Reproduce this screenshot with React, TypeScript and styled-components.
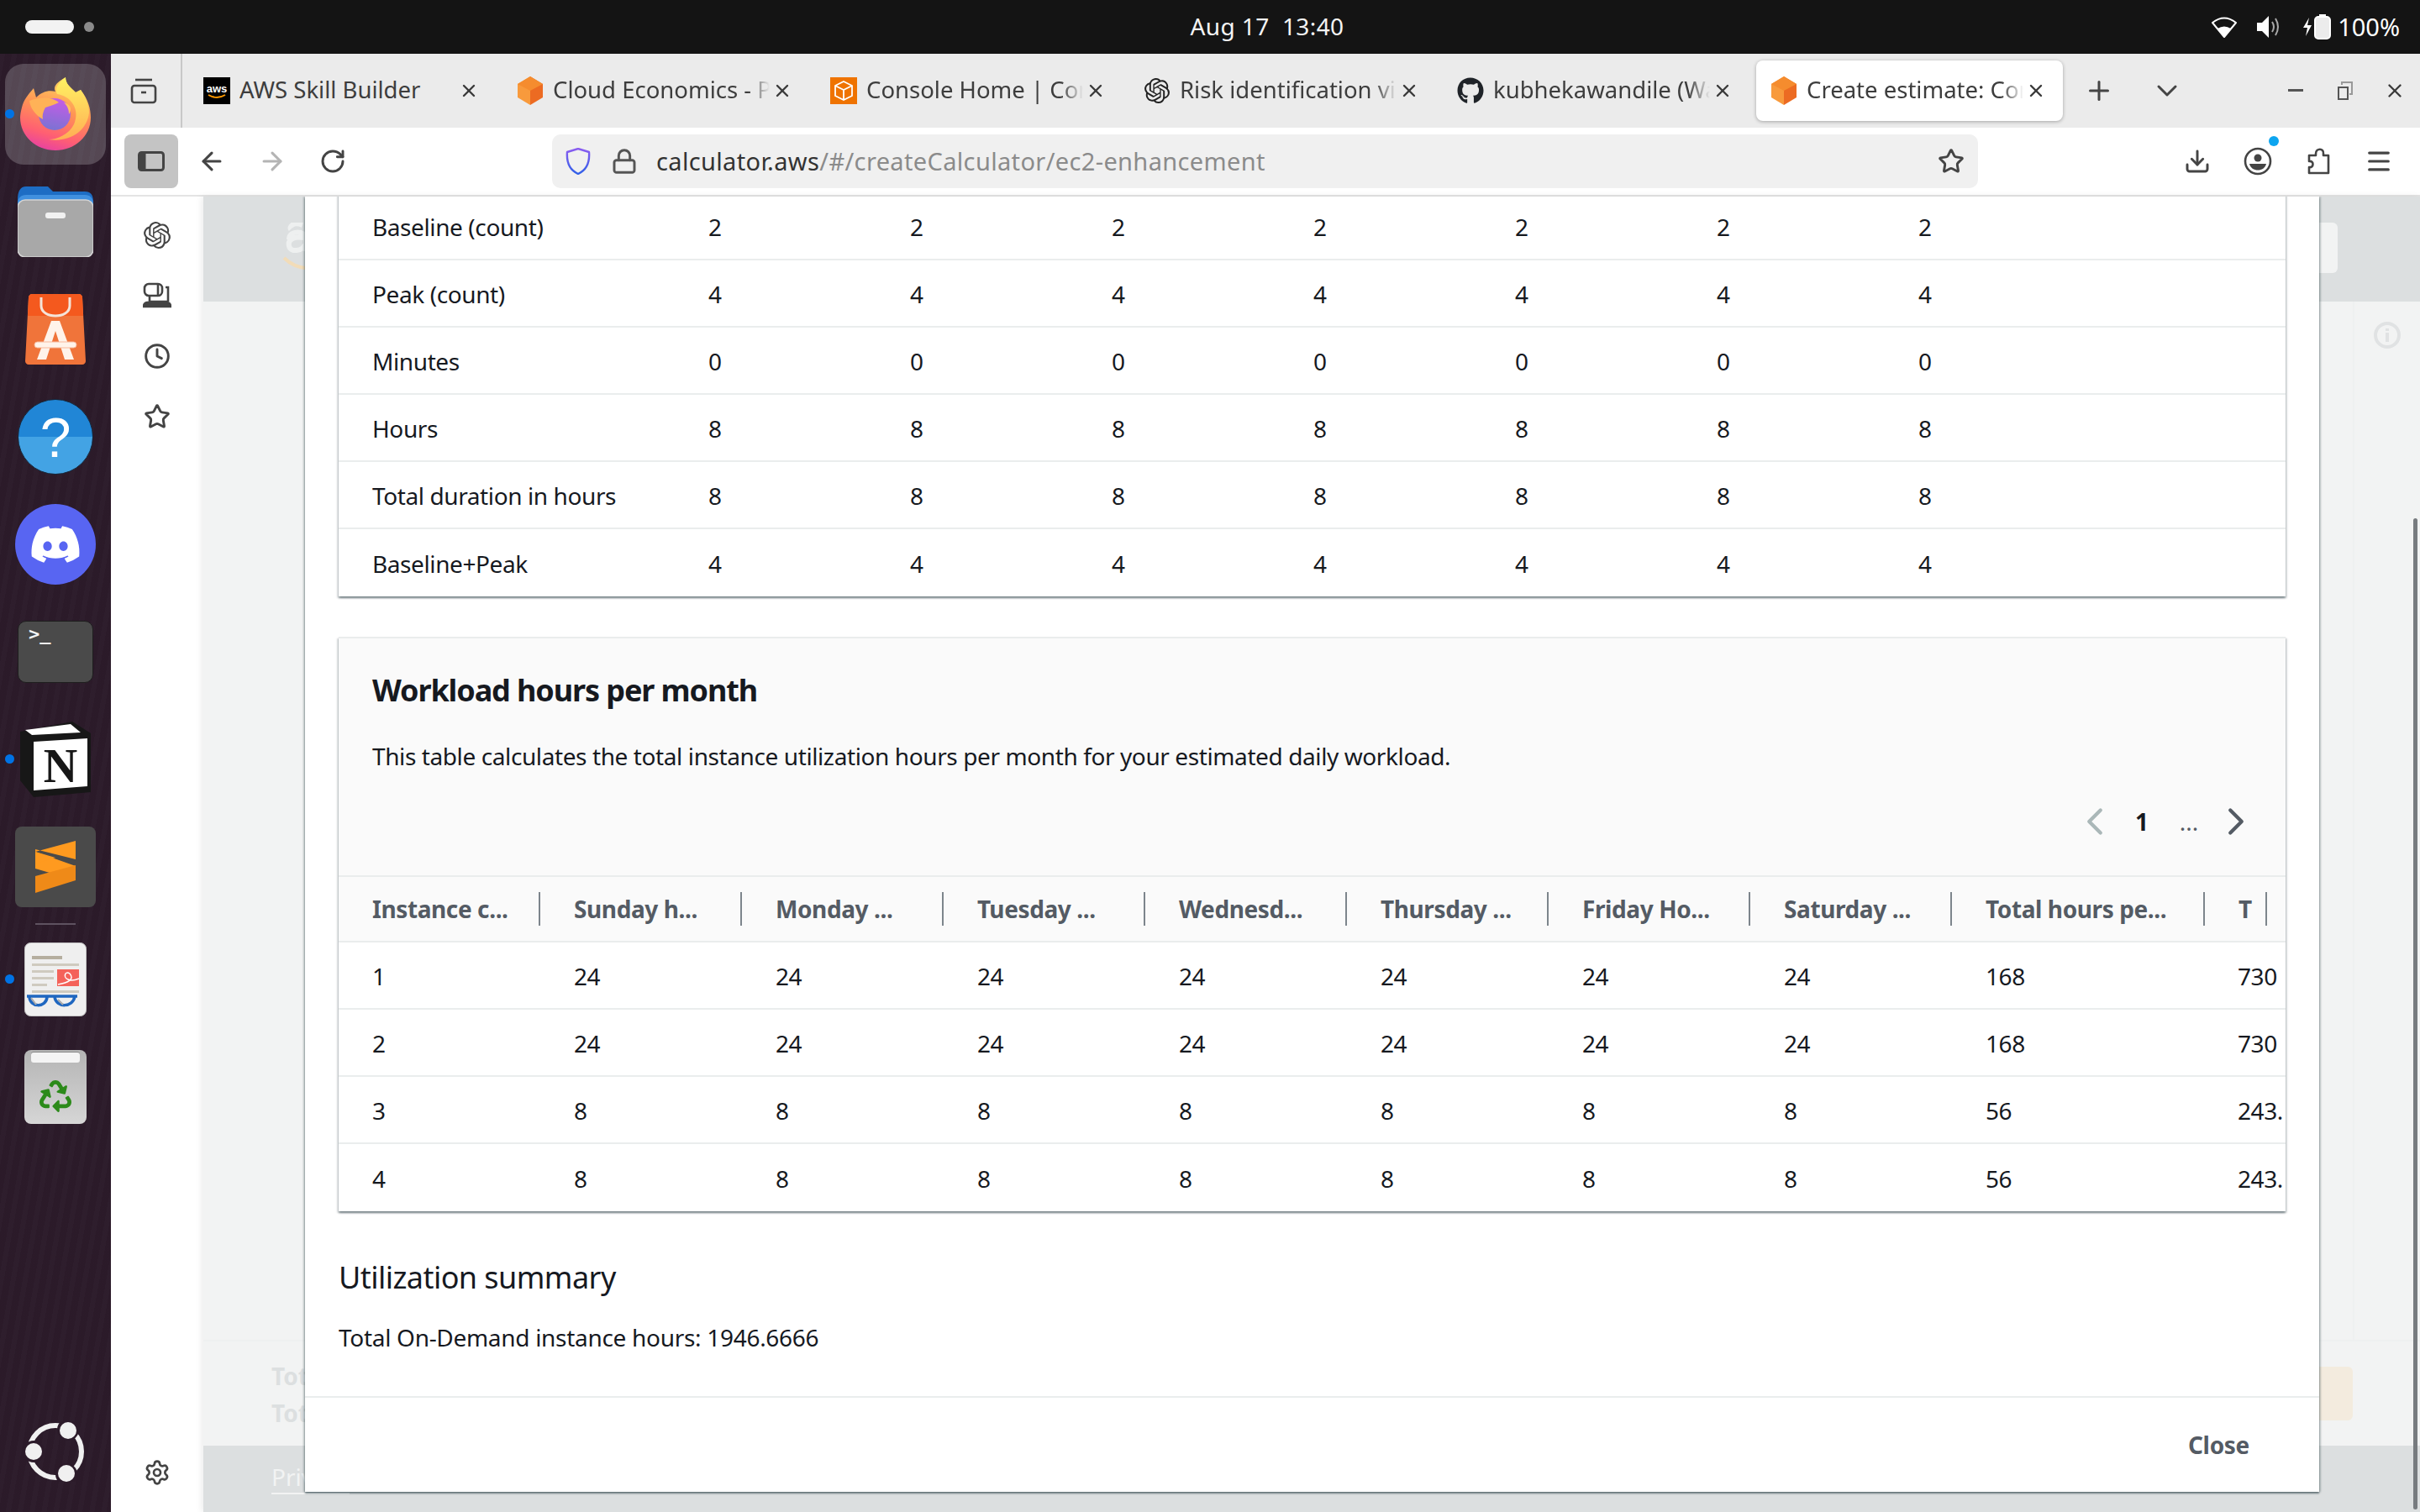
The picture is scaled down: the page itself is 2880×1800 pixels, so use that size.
import React from "react";
import styled, { createGlobalStyle, css } from "styled-components";
import {
  ArrowLeft, ArrowRight, RotateCw, Lock, Star, Download, Menu, Clock, Settings, Plus, ChevronDown, X,
  ChevronLeft, ChevronRight,
} from "lucide-react";
import { FaDiscord, FaGithub, FaRecycle } from "react-icons/fa";
import { SiOpenai } from "react-icons/si";

const UI = `"Noto Sans", "Open Sans", sans-serif`;

const Global = createGlobalStyle`
  html, body { margin: 0; padding: 0; width: 2880px; height: 1800px; overflow: hidden; background: #fff; }
  * { box-sizing: border-box; }
  body { font-family: ${UI}; }
`;

const Screen = styled.div`
  width: 2880px; height: 1800px; display: flex; flex-direction: column; overflow: hidden; position: relative;
`;
const TopBar = styled.header`
  height: 64px; background: #141414; display: grid; grid-template-columns: 1fr auto 1fr; align-items: center;
  color: #fff; padding: 0 24px 0 30px; flex: none;
`;
const Activities = styled.div`display: flex; align-items: center; gap: 12px;`;
const Pill = styled.span`width: 58px; height: 16px; border-radius: 8px; background: #f2f2f2;`;
const Dot = styled.span`width: 12px; height: 12px; border-radius: 50%; background: #8a8a8a;`;
const ClockText = styled.div`font-size: 28px; white-space: pre; font-weight: 400; letter-spacing: 0.4px; color: #f4f4f4; margin: -3px 0 0 130px;`;
const Status = styled.div`display: flex; align-items: center; justify-content: flex-end; gap: 24px; font-size: 29px; letter-spacing: 0;`;
const BatteryGroup = styled.div`display: flex; align-items: center; gap: 8px;`;
const Percent = styled.span`margin-top: -2px;`;

const Desktop = styled.div`flex: 1; display: flex; min-height: 0;`;
const Dock = styled.nav`
  width: 132px; flex: none; padding-top: 8px; padding-bottom: 36px; display: flex; flex-direction: column; position: relative;
  background:
    repeating-linear-gradient(100deg, rgba(255,255,255,0.012) 0 6px, rgba(0,0,0,0.02) 6px 14px),
    #2c1b2a;
`;
const Slot = styled.div`height: 128px; display: flex; align-items: center; justify-content: center; position: relative; flex: none;`;
const ActiveTile = styled.div`
  position: absolute; left: 6px; top: 4px; width: 120px; height: 120px; border-radius: 22px; background: rgba(255,255,255,0.2);
`;
const RunDot = styled.span`position: absolute; left: 6px; top: 58px; width: 11px; height: 11px; border-radius: 50%; background: #0073e5;`;
const DockSep = styled.div`width: 48px; height: 2px; margin: 3px auto 1px; background: #5e5260; flex: none;`;
const DockLogo = styled.div`margin-top: auto; display: flex; justify-content: center;`;
const HelpBall = styled.div`
  width: 90px; height: 90px; border-radius: 50%; border: 1px solid #16273a; color: #fff; font-size: 66px; line-height: 90px; text-align: center;
  background: linear-gradient(#2186d6 0 50%, #43a3e4 50% 100%); font-family: "Liberation Sans", sans-serif;
`;
const DiscordBall = styled.div`
  width: 96px; height: 96px; border-radius: 50%; background: #5865f2; color: #fff; display: flex; align-items: center; justify-content: center;
`;
const TerminalTile = styled.div`
  width: 90px; height: 74px; border-radius: 10px; background: #4a4a4a; border: 1px solid #1e1e1e; color: #f4f4f4;
  font: 700 22px/24px "DejaVu Sans Mono", monospace; padding: 3px 0 0 12px; letter-spacing: 0;
`;
const TrashTile = styled.div`
  width: 74px; height: 88px; border-radius: 8px; position: relative; color: #2c8a1a; display: flex; align-items: flex-end; justify-content: center; padding-bottom: 14px;
  background: linear-gradient(#b4b4b4, #d6d6d6);
`;
const TrashPaper = styled.span`
  position: absolute; left: 8px; right: 8px; top: 3px; height: 12px; border-radius: 3px; background: #f4f4f4; box-shadow: 0 -1px 0 #8a8a8a;
`;

const Browser = styled.div`flex: 1; display: flex; flex-direction: column; min-width: 0;`;
const TabBar = styled.div`height: 88px; background: #ebebeb; display: flex; align-items: center; flex: none; color: #3b3b3b;`;
const TabsBox = styled.div`
  width: 85px; height: 88px; border-right: 2px solid #c8c8c8; display: flex; align-items: center; justify-content: center; padding-right: 6px; margin-right: 8px; flex: none;
`;
const Tabs = styled.div`display: flex; gap: 8px;`;
const Tab = styled.div<{ $active?: boolean }>`
  width: 365px; height: 72px; display: flex; align-items: center; padding-left: 17px; position: relative; border-radius: 8px; flex: none;
  ${(p) => p.$active && css`background: #fff; box-shadow: 0 1px 4px rgba(0,0,0,0.3);`}
`;
const Favicon = styled.span`width: 32px; height: 32px; flex: none; display: flex; align-items: center; justify-content: center;`;
const TabTitle = styled.span<{ $fade?: boolean }>`
  margin: -2px 0 0 11px; width: 258px; overflow: hidden; white-space: nowrap; font-size: 27.5px; line-height: 40px; color: #3d3d3d; letter-spacing: 0;
  ${(p) => p.$fade && css`mask-image: linear-gradient(90deg, #000 90%, transparent 100%);`}
`;
const TabClose = styled.span`position: absolute; left: 319px; top: 22px; width: 28px; height: 28px; display: flex; align-items: center; justify-content: center; color: #3a3a3a;`;
const StripButton = styled.span<{ $gap: number }>`
  width: 48px; height: 48px; display: flex; align-items: center; justify-content: center; margin-left: ${(p) => p.$gap}px; color: #444; flex: none;
`;
const WindowControls = styled.div`margin-left: auto; display: flex; gap: 11px; padding-right: 6px;`;
const WinBtn = styled.span`width: 48px; height: 48px; display: flex; align-items: center; justify-content: center; color: #3a3a3a;`;

const NavBar = styled.div`height: 80px; background: #fff; display: flex; align-items: center; padding-left: 16px; flex: none; color: #444;`;
const SideToggle = styled.span`width: 64px; height: 64px; border-radius: 8px; background: #c4c4c4; display: flex; align-items: center; justify-content: center; margin-right: 4px; flex: none;`;
const NavBtn = styled.span<{ $dim?: boolean }>`width: 72px; height: 64px; display: flex; align-items: center; justify-content: center; flex: none; color: ${(p) => (p.$dim ? "#b4b4b4" : "#444")};`;
const UrlBar = styled.div`
  width: 1697px; height: 64px; margin-left: 225px; background: #f0f0f0; border-radius: 10px; display: flex; align-items: center; padding: 0 16px; flex: none;
`;
const LockBox = styled.span`margin-left: 24px; display: flex; color: #555;`;
const UrlText = styled.span`margin: -1px 0 0 22px; font-size: 29px; letter-spacing: 0.35px; color: #8b8b8b;`;
const UrlHost = styled.span`color: #333;`;
const StarBox = styled.span`margin-left: auto; display: flex; color: #444;`;
const Toolbar = styled.div`display: flex; margin-left: 225px;`;
const ToolBtn = styled.span`width: 72px; height: 64px; display: flex; align-items: center; justify-content: center; color: #444; position: relative;`;
const Badge = styled.span`position: absolute; left: 49px; top: 2px; width: 12px; height: 12px; border-radius: 50%; background: #0ca5f0;`;

const Workspace = styled.div`flex: 1; display: flex; min-height: 0; border-top: 2px solid #e4e4e4; margin-top: 0;`;
const SideBar = styled.aside`width: 110px; flex: none; background: #fff; display: flex; flex-direction: column; align-items: center; padding-top: 10px; padding-bottom: 11px; color: #444;`;
const SideIcon = styled.span`width: 72px; height: 72px; display: flex; align-items: center; justify-content: center; flex: none;`;
const SideBottom = styled(SideIcon)`margin-top: auto;`;

const Page = styled.main`flex: 1; position: relative; display: flex; flex-direction: column; min-width: 0; background: #f2f3f3; box-shadow: -2px 0 8px rgba(0,0,0,0.08); overflow: hidden;`;
const PageHeader = styled.div`height: 125px; flex: none; background: #dcdfe0; display: flex; align-items: flex-start; padding: 31px 98px 0 94px;`;
const HeaderButton = styled.div`margin-left: auto; width: 120px; height: 60px; border-radius: 6px; background: #f2f3f3;`;
const PageBody = styled.div`flex: 1; display: flex; min-height: 0;`;
const PageMain = styled.div`flex: 1;`;
const ToolsRail = styled.div`width: 80px; border-left: 2px solid #eef0f0; display: flex; justify-content: center; padding-top: 24px; color: #e0e2e3;`;
const SummaryBar = styled.div`height: 126px; flex: none; border-top: 2px solid #eef0f0; display: flex; justify-content: space-between; align-items: center; padding: 0 80px 0 81px;`;
const SummaryLines = styled.div`font-size: 28px; line-height: 44px; font-weight: 700; color: #dcdfe0; padding-top: 2px;`;
const PeachBox = styled.div`width: 400px; height: 64px; border-radius: 6px; background: #f3ebde;`;
const PageFooter = styled.div`height: 79px; flex: none; background: #dcdfe0; padding: 18px 0 0 81px;`;
const FooterLink = styled.span`font-size: 28px; line-height: 38px; color: #f2f3f3; border-bottom: 2px solid #f2f3f3; display: inline-block;`;

const Modal = styled.section`
  position: absolute; left: 121px; top: 0; width: 2397px; height: 1542px; background: #fff; display: flex; flex-direction: column; overflow: hidden;
  box-shadow: 0 2px 2px rgba(0,28,36,0.5), 2px 0 2px rgba(0,28,36,0.2), -2px 0 2px rgba(0,28,36,0.2);
`;
const ModalBody = styled.div`padding: 0 40px; flex: 1; color: #16191f; min-height: 0;`;
const Card = styled.div`
  background: #fff; position: relative;
  box-shadow: 0 2px 2px rgba(0,28,36,0.4), 2px 2px 2px rgba(0,28,36,0.12), -2px 2px 2px rgba(0,28,36,0.12);
`;
const UpperCard = styled(Card)`margin-top: -4px;`;
const WorkloadCard = styled(Card)`margin-top: 48px; border-top: 2px solid #eaeded;`;
const Row = styled.div<{ $first: number }>`
  height: 80px; display: grid; grid-template-columns: ${(p) => p.$first}px repeat(7, 240px) 1fr; align-items: center;
  border-bottom: 2px solid #eaeded; font-size: 28px; overflow: hidden;
  &:last-child { border-bottom: 0; }
`;
const WideRow = styled.div`
  height: 80px; display: grid; grid-template-columns: repeat(8, 240px) 300px 1fr; align-items: center;
  border-bottom: 2px solid #eaeded; font-size: 28px; overflow: hidden; padding-right: 2px;
  &:last-child { border-bottom: 0; }
`;
const Cell = styled.div`padding: 2px 0 0 40px; white-space: nowrap; overflow: hidden; letter-spacing: -0.4px;`;
const CardHead = styled.div`background: #fafafa; padding: 40px 40px 0; height: 284px; border-bottom: 2px solid #eaeded;`;
const CardTitle = styled.h2`margin: 0; font-size: 36px; line-height: 44px; font-weight: 700; color: #16191f; letter-spacing: -1.1px;`;
const CardText = styled.p`margin: 34px 0 0; font-size: 28px; line-height: 44px; color: #16191f; letter-spacing: -0.4px;`;
const Pager = styled.div`display: flex; justify-content: flex-end; align-items: center; margin-top: 34px; height: 44px; padding-right: 3px; gap: 24px;`;
const PageArrow = styled.span<{ $dim?: boolean }>`width: 32px; display: flex; justify-content: center; color: ${(p) => (p.$dim ? "#aab7b8" : "#545b64")}; svg { flex: none; }`;
const PageNum = styled.span<{ $bold?: boolean }>`width: 32px; text-align: center; font-size: 28px; font-weight: ${(p) => (p.$bold ? 700 : 400)}; color: ${(p) => (p.$bold ? "#16191f" : "#545b64")};`;
const HeadRow = styled.div`
  height: 78px; background: #fafafa; display: grid; grid-template-columns: repeat(8, 240px) 301px 74px 1fr; align-items: center; border-bottom: 2px solid #eaeded;
`;
const HeadCell = styled.div`
  height: 40px; line-height: 40px; padding-left: 40px; border-right: 2px solid #7d858c; font-size: 28px; font-weight: 700; color: #545b64; white-space: nowrap; overflow: hidden; letter-spacing: -0.4px;
`;
const HeadClip = styled(HeadCell)`padding-right: 10px;`;
const SummaryTitle = styled.h3`margin: 57px 0 0; font-size: 36px; line-height: 44px; font-weight: 400; color: #16191f; letter-spacing: -0.55px;`;
const SummaryText = styled.p`margin: 27px 0 0; font-size: 28px; line-height: 44px; letter-spacing: -0.3px;`;
const ModalFoot = styled.footer`height: 114px; flex: none; border-top: 2px solid #eaeded; display: flex; align-items: center; justify-content: flex-end; padding-right: 83px;`;
const CloseBtn = styled.span`font-size: 28px; font-weight: 700; color: #545b64; letter-spacing: -0.3px;`;
const ScrollThumb = styled.div`position: absolute; right: 3px; top: 383px; width: 5px; bottom: 3px; border-radius: 3px; background: #777b7f;`;

/* drawings */
const CubeIcon = () => (
  <svg width="30" height="34" viewBox="0 0 30 34"><polygon points="15,0 30,9 30,25 15,34" fill="#ec6b22" /><polygon points="15,0 0,9 0,25 15,34" fill="#f89a3c" /><polygon points="15,0 30,9 15,17 0,9" fill="#f58c2e" /></svg>
);
const AwsFav = () => (
  <svg width="32" height="32" viewBox="0 0 32 32"><rect width="32" height="32" fill="#000" /><text x="16" y="18" fontSize="13" fontFamily="Liberation Sans, sans-serif" fontWeight="700" textAnchor="middle" fill="#fff">aws</text><path d="M6 21q10 6 20 0" stroke="#f90" strokeWidth="2" fill="none" /></svg>
);
const ConsoleFav = () => (
  <svg width="32" height="32" viewBox="0 0 32 32"><rect width="32" height="32" fill="#ef7300" /><path d="M16 5l10 5v12l-10 5-10-5V10zM6 10l10 5 10-5M16 15v12" fill="none" stroke="#fff" strokeWidth="1.8" /></svg>
);
const FirefoxIcon = () => (
  <svg width="84" height="88" viewBox="0 0 84 88">
    <defs>
      <linearGradient id="ffo" x1="0.7" y1="0" x2="0.4" y2="1"><stop offset="0" stopColor="#ffd53a" /><stop offset="0.45" stopColor="#ff7a2a" /><stop offset="0.8" stopColor="#ff3750" /><stop offset="1" stopColor="#e31587" /></linearGradient>
      <linearGradient id="ffy" x1="0.5" y1="0" x2="0.5" y2="1"><stop offset="0" stopColor="#fff03c" /><stop offset="1" stopColor="#ff9a2a" /></linearGradient>
      <linearGradient id="ffp" x1="0.6" y1="0" x2="0.4" y2="1"><stop offset="0" stopColor="#b833e1" /><stop offset="1" stopColor="#5a50c8" /></linearGradient>
    </defs>
    <path d="M2 36C4 27 10 20 16 13L19 24C26 17 34 15 42 17C38 9 48 4 54 0C54 8 60 12 66 18L72 15C81 26 84 38 84 48C84 70 65 87 42 87C19 87 0 70 0 48C0 44 1 40 2 36Z" fill="url(#ffo)" />
    <path d="M54 0C46 6 40 14 44 20C60 22 72 38 64 56C58 68 44 74 34 74C58 78 80 64 82 42C82 32 78 24 72 15L66 18C60 12 54 8 54 0Z" fill="url(#ffy)" />
    <circle cx="41" cy="44" r="19" fill="url(#ffp)" />
    <path d="M11 28C22 24 36 22 46 30C40 33 35 34 30 36C27 41 26 46 27 50C17 44 12 36 11 28Z" fill="#ff9f2e" />
    <path d="M52 30C56 34 58 38 58 44C62 38 60 32 52 30Z" fill="#ffb13a" />
  </svg>
);
const FilesIcon = () => (
  <svg width="90" height="84" viewBox="0 0 90 84">
    <path d="M0 16C0 6 3 0 10 0H36L42 6H80C87 6 90 10 90 18V40H0Z" fill="#1d6dc4" />
    <path d="M0 20C0 14 4 10 10 10H80C86 10 90 14 90 20V30H0Z" fill="#4a98e6" opacity="0.8" />
    <rect y="16" width="90" height="68" rx="9" fill="#a8a8a8" stroke="#d4d4d4" strokeWidth="1.5" />
    <rect x="33" y="31" width="24" height="7" rx="3" fill="#f1f1f1" />
  </svg>
);
const AppCenterIcon = () => (
  <svg width="72" height="84" viewBox="0 0 72 84">
    <path d="M4 4C4 2 6 0 8 0H64C66 0 68 2 68 4L72 80C72 82 70 84 68 84H4C2 84 0 82 0 80Z" fill="#f0743a" />
    <path d="M4 4C4 2 6 0 8 0H64C66 0 68 2 68 4L69 26H3Z" fill="#f4591e" />
    <path d="M19 4V14C19 30 53 30 53 14V4" stroke="#f4e4d8" strokeWidth="3" fill="none" />
    <path d="M14 78L31 32H41L58 78H47L36 44L25 78Z" fill="#fff3ea" />
    <rect x="11" y="57" width="50" height="7" rx="3.5" fill="#fff3ea" stroke="#f7b89a" strokeWidth="1" />
  </svg>
);
const NotionIcon = () => (
  <svg width="88" height="90" viewBox="0 0 88 90">
    <path d="M2 12L64 0L86 14V84L18 90L2 70Z" fill="#171717" />
    <path d="M8 10L62 3L74 13L16 16Z" fill="#fff" />
    <path d="M18 24L82 20V77L18 82Z" fill="#fff" />
    <text x="50" y="72" fontSize="56" fontWeight="700" fontFamily="Liberation Serif, serif" textAnchor="middle" fill="#171717">N</text>
  </svg>
);
const SublimeIcon = () => (
  <svg width="96" height="96" viewBox="0 0 96 96">
    <rect width="96" height="96" rx="8" fill="#4a4a4a" />
    <path d="M24 30L72 17V39L24 27Z" fill="#ff9a1f" />
    <path d="M24 30L72 47V64L24 50Z" fill="#ff9a1f" />
    <path d="M24 59L72 46V64L24 79Z" fill="#ef8a18" />
    <path d="M24 30L48 37L24 44Z" fill="#ff9a1f" />
  </svg>
);
const EvinceIcon = () => (
  <svg width="74" height="88" viewBox="0 0 74 88">
    <rect x="0.5" y="0.5" width="73" height="87" rx="7" fill="#efefef" stroke="#c4c4c4" />
    <g fill="#b5ae9f"><rect x="9" y="16" width="36" height="4" /></g>
    <g fill="#cfcabf"><rect x="9" y="25" width="56" height="3" /><rect x="9" y="33" width="26" height="3" /><rect x="9" y="41" width="26" height="3" /><rect x="9" y="49" width="18" height="3" /><rect x="9" y="57" width="56" height="3" /></g>
    <rect x="39" y="32" width="26" height="20" fill="#f4625a" />
    <path d="M40 50C52 48 60 44 54 37C48 33 46 42 52 44C56 46 60 45 65 43" stroke="#fff" strokeWidth="1.5" fill="none" />
    <path d="M3 64H63M6 64C6 78 26 78 27 65M36 65C38 78 58 78 60 64" stroke="#1f67c0" strokeWidth="3.5" fill="none" />
    <path d="M8 66L14 74M40 68L46 74" stroke="#aaa" strokeWidth="2" />
  </svg>
);
const UbuntuIcon = () => (
  <svg width="72" height="72" viewBox="0 0 72 72">
    <circle cx="36" cy="36" r="31" fill="none" stroke="#f0f0f0" strokeWidth="6" />
    <circle cx="51" cy="10" r="13" fill="#2c1b2a" /><circle cx="10" cy="36" r="13" fill="#2c1b2a" /><circle cx="49" cy="63" r="13" fill="#2c1b2a" />
    <circle cx="51" cy="11" r="10" fill="#f0f0f0" /><circle cx="10" cy="36" r="10" fill="#f0f0f0" /><circle cx="49" cy="62" r="10" fill="#f0f0f0" />
  </svg>
);
const WifiIcon = () => (
  <svg width="30" height="26" viewBox="0 0 30 26"><path d="M15 25L1 8Q15 -3 29 8Z" fill="none" stroke="#fff" strokeWidth="2" strokeLinejoin="round" /><path d="M15 25L7 15Q15 10 23 15Z" fill="#fff" /></svg>
);
const VolumeIcon = () => (
  <svg width="30" height="28" viewBox="0 0 30 28"><path d="M0 9H6L14 1V27L6 19H0Z" fill="#fff" /><path d="M18 8Q22 14 18 20M22 4Q28 14 22 24" stroke="#aaa" strokeWidth="2" fill="none" /></svg>
);
const BatteryIcon = () => (
  <svg width="34" height="30" viewBox="0 0 34 30"><path d="M8 4L1 16H6L4 26L11 13H6Z" fill="#fff" /><rect x="15" y="3" width="18" height="26" rx="4" fill="#ececec" stroke="#fff" strokeWidth="2" /><rect x="20" y="0" width="8" height="3" fill="#fff" /></svg>
);
const TabsIcon = () => (
  <svg width="32" height="32" viewBox="0 0 32 32" fill="none" stroke="#444" strokeWidth="2.6"><rect x="2" y="10" width="28" height="20" rx="3" /><path d="M6 3h20" /><path d="M13 18h6" /></svg>
);
const SidebarIcon = () => (
  <svg width="32" height="24" viewBox="0 0 32 24"><rect x="1.5" y="1.5" width="29" height="21" rx="3" fill="none" stroke="#444" strokeWidth="3" /><rect x="1.5" y="1.5" width="8" height="21" fill="#444" /></svg>
);
const ShieldIcon = () => (
  <svg width="30" height="32" viewBox="0 0 30 32" fill="none"><path d="M15 1L28 5C29 18 24 27 15 31C6 27 1 18 2 5Z" stroke="url(#shg)" strokeWidth="2.4" strokeLinejoin="round" /><defs><linearGradient id="shg" x1="0.5" y1="0" x2="0.5" y2="1"><stop offset="0" stopColor="#8a5cf0" /><stop offset="1" stopColor="#3060e8" /></linearGradient></defs></svg>
);
const AccountIcon = () => (
  <svg width="34" height="34" viewBox="0 0 34 34" fill="none"><circle cx="17" cy="17" r="15" stroke="#444" strokeWidth="2.6" /><circle cx="17" cy="13" r="4.5" fill="#444" /><path d="M7 20H27C25 30 9 30 7 20Z" fill="#444" /></svg>
);
const PuzzleIcon = () => (
  <svg width="28" height="32" viewBox="0 0 28 32" fill="none" stroke="#444" strokeWidth="2.6" strokeLinejoin="round"><path d="M11 7C11 0 21 0 20 7V9H26V30H3V23C9 24 9 15 3 16V9H11Z" /></svg>
);
const ExtensionSync = () => (
  <svg width="34" height="32" viewBox="0 0 34 32" fill="none" stroke="#444" strokeWidth="2.6"><rect x="2" y="2" width="21" height="14" rx="5" /><path d="M18 2v14M27 6h3v17M8 16v7h22" /><path d="M1 29c0-3 2-5 4-5h24c2 0 4 2 4 5z" fill="#444" /></svg>
);
const InfoIcon = () => (
  <svg width="32" height="32" viewBox="0 0 32 32" fill="none"><circle cx="16" cy="16" r="14" stroke="currentColor" strokeWidth="4" /><rect x="14" y="13" width="4" height="11" fill="currentColor" /><rect x="14" y="8" width="4" height="3" fill="currentColor" /></svg>
);
const AwsLogo = () => (
  <svg width="90" height="62" viewBox="0 0 90 62" fill="none"><path d="M24 3C12 -2 8 6 10 8M8 20C8 8 28 10 28 18V34M26 18C14 16 6 20 8 28C10 36 24 34 27 26" stroke="#eef0f0" strokeWidth="6" /><path d="M2 42C16 56 40 60 70 46" stroke="#f2dcb8" strokeWidth="4" /></svg>
);
const MinIcon = () => (<svg width="18" height="4"><rect width="18" height="3" fill="#555" /></svg>);
const RestoreIcon = () => (
  <svg width="18" height="22" viewBox="0 0 18 22" fill="none" stroke="#555" strokeWidth="2"><rect x="1" y="7" width="11" height="14" /><path d="M5 4V1H17V15H14" stroke="#999" /></svg>
);

const tabs: { title: string; icon: React.ReactNode; fade?: boolean; active?: boolean }[] = [
  { title: "AWS Skill Builder", icon: <AwsFav /> },
  { title: "Cloud Economics - Pricing", icon: <CubeIcon />, fade: true },
  { title: "Console Home | Console", icon: <ConsoleFav />, fade: true },
  { title: "Risk identification via", icon: <SiOpenai size={30} color="#222" />, fade: true },
  { title: "kubhekawandile (Wandile", icon: <FaGithub size={32} color="#1f2328" />, fade: true },
  { title: "Create estimate: Configure", icon: <CubeIcon />, fade: true, active: true },
];

const upperRows: [string, string][] = [
  ["Baseline (count)", "2"],
  ["Peak (count)", "4"],
  ["Minutes", "0"],
  ["Hours", "8"],
  ["Total duration in hours", "8"],
  ["Baseline+Peak", "4"],
];
const headers = ["Sunday h...", "Monday ...", "Tuesday ...", "Wednesd...", "Thursday ...", "Friday Ho...", "Saturday ..."];
const lowerRows = [
  { n: "1", h: "24", week: "168", month: "730" },
  { n: "2", h: "24", week: "168", month: "730" },
  { n: "3", h: "8", week: "56", month: "243." },
  { n: "4", h: "8", week: "56", month: "243." },
];
const days = [0, 1, 2, 3, 4, 5, 6];

export default function App() {
  return (
    <Screen>
      <Global />
      <TopBar>
        <Activities><Pill /><Dot /></Activities>
        <ClockText>{"Aug 17  13:40"}</ClockText>
        <Status>
          <WifiIcon />
          <VolumeIcon />
          <BatteryGroup><BatteryIcon /><Percent>100%</Percent></BatteryGroup>
        </Status>
      </TopBar>
      <Desktop>
        <Dock>
          <Slot><ActiveTile /><RunDot /><FirefoxIcon /></Slot>
          <Slot><FilesIcon /></Slot>
          <Slot><AppCenterIcon /></Slot>
          <Slot><HelpBall>?</HelpBall></Slot>
          <Slot><DiscordBall><FaDiscord size={62} /></DiscordBall></Slot>
          <Slot><TerminalTile>{">_"}</TerminalTile></Slot>
          <Slot><RunDot /><NotionIcon /></Slot>
          <Slot><SublimeIcon /></Slot>
          <DockSep />
          <Slot><RunDot /><EvinceIcon /></Slot>
          <Slot><TrashTile><TrashPaper /><FaRecycle size={38} /></TrashTile></Slot>
          <DockLogo><UbuntuIcon /></DockLogo>
        </Dock>
        <Browser>
          <TabBar>
            <TabsBox><TabsIcon /></TabsBox>
            <Tabs>
              {tabs.map((t) => (
                <Tab key={t.title} $active={t.active}>
                  <Favicon>{t.icon}</Favicon>
                  <TabTitle $fade={t.fade}>{t.title}</TabTitle>
                  <TabClose><X size={24} strokeWidth={2.4} /></TabClose>
                </Tab>
              ))}
            </Tabs>
            <StripButton $gap={19}><Plus size={36} strokeWidth={2} /></StripButton>
            <StripButton $gap={33}><ChevronDown size={40} strokeWidth={1.8} /></StripButton>
            <WindowControls>
              <WinBtn><MinIcon /></WinBtn>
              <WinBtn><RestoreIcon /></WinBtn>
              <WinBtn><X size={26} strokeWidth={2.2} /></WinBtn>
            </WindowControls>
          </TabBar>
          <NavBar>
            <SideToggle><SidebarIcon /></SideToggle>
            <NavBtn><ArrowLeft size={34} strokeWidth={2.2} /></NavBtn>
            <NavBtn $dim><ArrowRight size={34} strokeWidth={2.2} /></NavBtn>
            <NavBtn><RotateCw size={32} strokeWidth={2.2} /></NavBtn>
            <UrlBar>
              <ShieldIcon />
              <LockBox><Lock size={32} strokeWidth={2.2} /></LockBox>
              <UrlText><UrlHost>calculator.aws</UrlHost>/#/createCalculator/ec2-enhancement</UrlText>
              <StarBox><Star size={32} strokeWidth={2.2} /></StarBox>
            </UrlBar>
            <Toolbar>
              <ToolBtn><Download size={32} strokeWidth={2.2} /></ToolBtn>
              <ToolBtn><AccountIcon /><Badge /></ToolBtn>
              <ToolBtn><PuzzleIcon /></ToolBtn>
              <ToolBtn><Menu size={34} strokeWidth={2.2} /></ToolBtn>
            </Toolbar>
          </NavBar>
          <Workspace>
            <SideBar>
              <SideIcon><SiOpenai size={32} /></SideIcon>
              <SideIcon><ExtensionSync /></SideIcon>
              <SideIcon><Clock size={32} strokeWidth={2.2} /></SideIcon>
              <SideIcon><Star size={32} strokeWidth={2.2} /></SideIcon>
              <SideBottom><Settings size={32} strokeWidth={2} /></SideBottom>
            </SideBar>
            <Page>
              <PageHeader><AwsLogo /><HeaderButton /></PageHeader>
              <PageBody>
                <PageMain />
                <ToolsRail><InfoIcon /></ToolsRail>
              </PageBody>
              <SummaryBar>
                <SummaryLines>Total upfront<br />Total monthly</SummaryLines>
                <PeachBox />
              </SummaryBar>
              <PageFooter><FooterLink>Privacy</FooterLink></PageFooter>
              <ScrollThumb />
              <Modal>
                <ModalBody>
                  <UpperCard>
                    {upperRows.map(([label, v]) => (
                      <Row key={label} $first={400}>
                        <Cell>{label}</Cell>
                        {days.map((d) => <Cell key={d}>{v}</Cell>)}
                      </Row>
                    ))}
                  </UpperCard>
                  <WorkloadCard>
                    <CardHead>
                      <CardTitle>Workload hours per month</CardTitle>
                      <CardText>This table calculates the total instance utilization hours per month for your estimated daily workload.</CardText>
                      <Pager>
                        <PageArrow $dim><ChevronLeft size={54} strokeWidth={1.9} /></PageArrow>
                        <PageNum $bold>1</PageNum>
                        <PageNum>...</PageNum>
                        <PageArrow><ChevronRight size={54} strokeWidth={1.9} /></PageArrow>
                      </Pager>
                    </CardHead>
                    <HeadRow>
                      <HeadCell>Instance c...</HeadCell>
                      {headers.map((h) => <HeadCell key={h}>{h}</HeadCell>)}
                      <HeadCell>Total hours pe...</HeadCell>
                      <HeadClip>T</HeadClip>
                    </HeadRow>
                    {lowerRows.map((r) => (
                      <WideRow key={r.n}>
                        <Cell>{r.n}</Cell>
                        {days.map((d) => <Cell key={d}>{r.h}</Cell>)}
                        <Cell>{r.week}</Cell>
                        <Cell>{r.month}</Cell>
                      </WideRow>
                    ))}
                  </WorkloadCard>
                  <SummaryTitle>Utilization summary</SummaryTitle>
                  <SummaryText>Total On-Demand instance hours: 1946.6666</SummaryText>
                </ModalBody>
                <ModalFoot><CloseBtn>Close</CloseBtn></ModalFoot>
              </Modal>
            </Page>
          </Workspace>
        </Browser>
      </Desktop>
    </Screen>
  );
}
